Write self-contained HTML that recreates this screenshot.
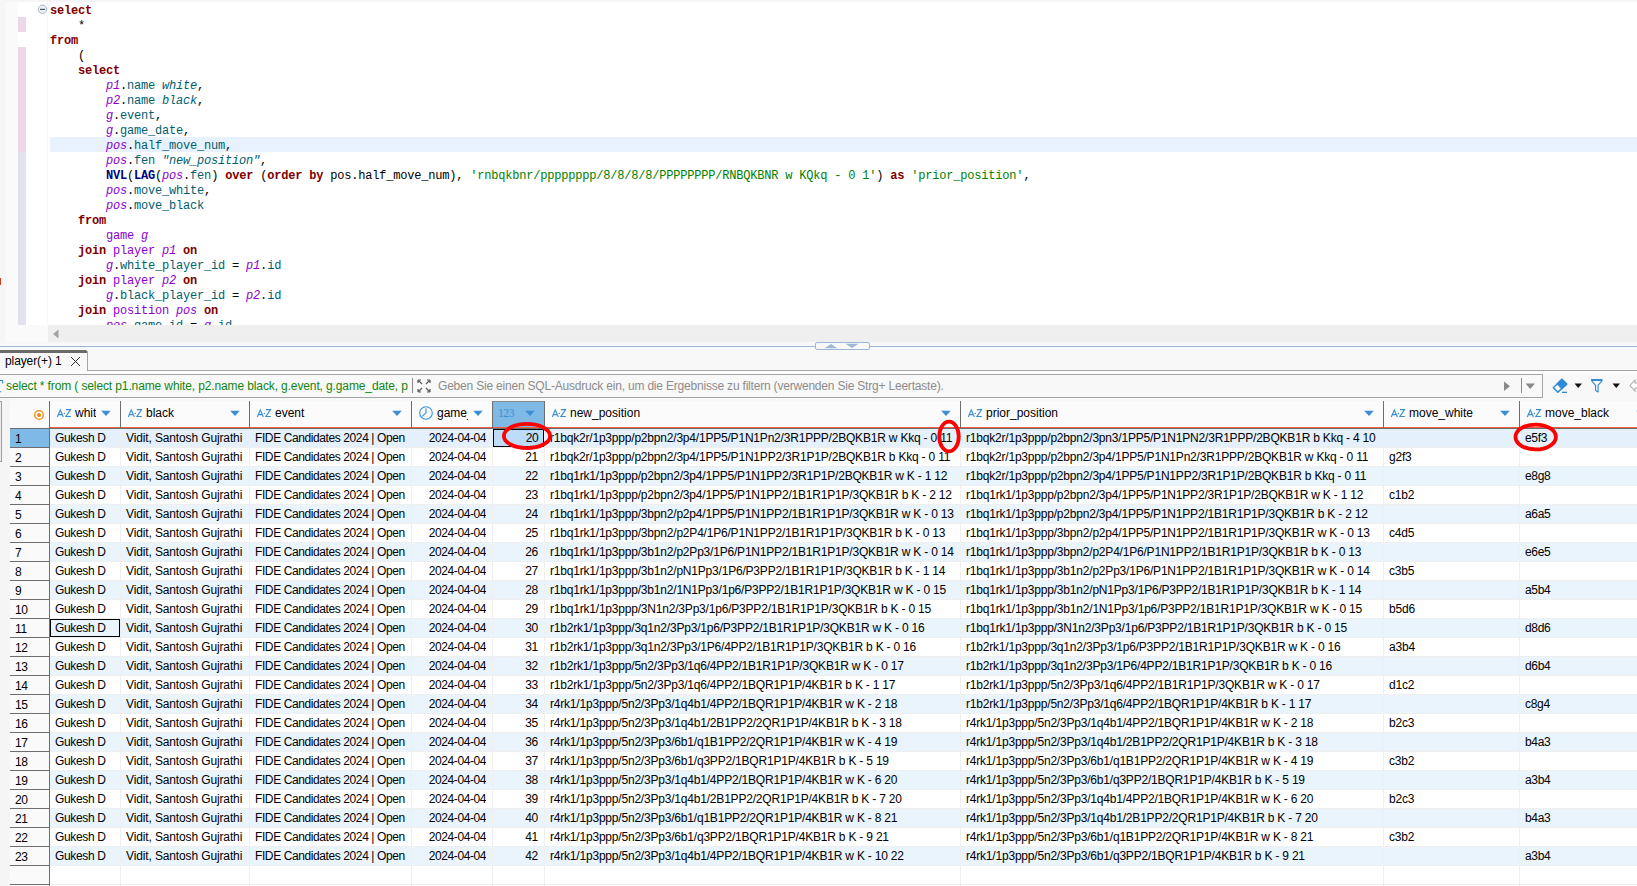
<!DOCTYPE html><html><head><meta charset="utf-8"><title>DBeaver</title><style>
html,body{margin:0;padding:0}
body{width:1637px;height:886px;overflow:hidden;position:relative;background:#f8f8f8;font-family:"Liberation Sans",sans-serif;font-size:12px;color:#000}
.a{position:absolute}
.code{position:absolute;left:50px;height:15px;line-height:15px;white-space:pre;font-family:"Liberation Mono",monospace;font-size:12px;letter-spacing:-0.2px;color:#000}
.k{color:#800000;font-weight:bold}
.f{color:#000080;font-weight:bold}
.al{color:#8d00d0;font-style:italic}
.tb{color:#8d00d0}
.c{color:#006070}
.ci{color:#006070;font-style:italic}
.s{color:#008000}
.hc{position:absolute;top:401px;height:26px;background:#fbfbfb}
.hl{position:absolute;top:401px;height:27px;width:1px;background:#6e6e6e}
.ht{position:absolute;top:403px;height:20px;line-height:20px;white-space:nowrap;overflow:hidden}
.cell{position:absolute;height:18px;line-height:18px;white-space:nowrap;overflow:hidden}
</style></head><body>
<div class="a" style="left:0;top:0;width:1637px;height:325px;background:#fff"></div>
<div class="a" style="left:0;top:0;width:1637px;height:2px;background:#f5f5f5"></div>
<div class="a" style="left:0;top:0;width:6px;height:346px;background:#f6f6f6"></div>
<div class="a" style="left:6px;top:2px;width:12px;height:340px;background:#fafafa"></div>
<div class="a" style="left:18px;top:325px;width:30px;height:17px;background:#fafafa"></div>
<div class="a" style="left:47px;top:2px;width:1px;height:323px;background:#f7f7f7"></div>
<div class="a" style="left:18px;top:17px;width:8px;height:15px;background:#e9d9ea"></div>
<div class="a" style="left:18px;top:47px;width:8px;height:105px;background:#e9d9ea"></div>
<div class="a" style="left:18px;top:152px;width:8px;height:173px;background:#e2e2ef"></div>
<div class="a" style="left:0;top:278px;width:1px;height:7px;background:#d04020"></div>
<div class="a" style="left:50px;top:137px;width:1587px;height:15px;background:#e8f2fe"></div>
<svg class="a" style="left:37px;top:4px" width="12" height="12" viewBox="0 0 12 12"><circle cx="5.5" cy="5.3" r="4.2" fill="#eef2f6" stroke="#a9b4c2" stroke-width="1"/><rect x="3" y="4.8" width="5" height="1.2" fill="#4a5566"/></svg>
<div class="a" style="left:0;top:0;width:1637px;height:325px;overflow:hidden">
<div class="code" style="top:4px"><span class="k">select</span></div>
<div class="code" style="top:19px">    *</div>
<div class="code" style="top:34px"><span class="k">from</span></div>
<div class="code" style="top:49px">    (</div>
<div class="code" style="top:64px">    <span class="k">select</span></div>
<div class="code" style="top:79px">        <span class="al">p1</span>.<span class="c">name</span> <span class="ci">white</span>,</div>
<div class="code" style="top:94px">        <span class="al">p2</span>.<span class="c">name</span> <span class="ci">black</span>,</div>
<div class="code" style="top:109px">        <span class="al">g</span>.<span class="c">event</span>,</div>
<div class="code" style="top:124px">        <span class="al">g</span>.<span class="c">game_date</span>,</div>
<div class="code" style="top:139px">        <span class="al">pos</span>.<span class="c">half_move_num</span>,</div>
<div class="code" style="top:154px">        <span class="al">pos</span>.<span class="c">fen</span> <span class="ci">&quot;new_position&quot;</span>,</div>
<div class="code" style="top:169px">        <span class="f">NVL</span>(<span class="f">LAG</span>(<span class="al">pos</span>.<span class="c">fen</span>) <span class="k">over</span> (<span class="k">order by</span> pos.half_move_num), <span class="s">&#x27;rnbqkbnr/pppppppp/8/8/8/8/PPPPPPPP/RNBQKBNR w KQkq - 0 1&#x27;</span>) <span class="k">as</span> <span class="s">&#x27;prior_position&#x27;</span>,</div>
<div class="code" style="top:184px">        <span class="al">pos</span>.<span class="c">move_white</span>,</div>
<div class="code" style="top:199px">        <span class="al">pos</span>.<span class="c">move_black</span></div>
<div class="code" style="top:214px">    <span class="k">from</span></div>
<div class="code" style="top:229px">        <span class="tb">game</span> <span class="al">g</span></div>
<div class="code" style="top:244px">    <span class="k">join</span> <span class="tb">player</span> <span class="al">p1</span> <span class="k">on</span></div>
<div class="code" style="top:259px">        <span class="al">g</span>.<span class="c">white_player_id</span> = <span class="al">p1</span>.<span class="c">id</span></div>
<div class="code" style="top:274px">    <span class="k">join</span> <span class="tb">player</span> <span class="al">p2</span> <span class="k">on</span></div>
<div class="code" style="top:289px">        <span class="al">g</span>.<span class="c">black_player_id</span> = <span class="al">p2</span>.<span class="c">id</span></div>
<div class="code" style="top:304px">    <span class="k">join</span> <span class="tb">position</span> <span class="al">pos</span> <span class="k">on</span></div>
<div class="code" style="top:319px">        <span class="al">pos</span>.<span class="c">game_id</span> = <span class="al">g</span>.<span class="c">id</span></div>
</div>
<div class="a" style="left:48px;top:325px;width:1589px;height:17px;background:#efefef"></div>
<svg class="a" style="left:52px;top:329px" width="8" height="10" viewBox="0 0 8 10"><path d="M6.5 0.5 L6.5 9.5 L1 5 Z" fill="#a3a3a3"/></svg>
<div class="a" style="left:0;top:342px;width:1637px;height:4px;background:#f8f8f8"></div>
<div class="a" style="left:0;top:346px;width:1637px;height:1px;background:#9cb6d6"></div>
<div class="a" style="left:815px;top:342px;width:53px;height:6px;border:1px solid #9cb6d6;border-radius:2px;background:#f8f8f8"></div>
<svg class="a" style="left:824px;top:343px" width="40" height="6" viewBox="0 0 40 6"><path d="M0.5 5.2 L7 1 L13.5 5.2 Z" fill="#9fb7d5"/><path d="M21.5 0.8 L34.5 0.8 L28 5 Z" fill="#9fb7d5"/></svg>
<svg class="a" style="left:0;top:350px" width="89" height="3" viewBox="0 0 89 3"><path d="M0 0 H86 L88 2 V3 H0 Z" fill="#6a6a6a"/></svg>
<div class="a" style="left:87px;top:352px;width:1px;height:19px;background:#a4a4a4"></div>
<div class="a" style="left:87px;top:370px;width:1550px;height:1px;background:#a4a4a4"></div>
<div class="a" style="left:0;top:371px;width:1637px;height:3px;background:#fcfcfc"></div>
<div class="a" style="left:5px;top:353px;height:17px;line-height:17px;white-space:nowrap;color:#000;letter-spacing:-0.1px">player(+) 1</div>
<svg class="a" style="left:70px;top:356px" width="11" height="11" viewBox="0 0 11 11"><path d="M1 1 L10 10 M10 1 L1 10" stroke="#222" stroke-width="0.95"/></svg>
<div class="a" style="left:-2px;top:374px;width:1544px;height:22px;border:1px solid #a4a4a4;border-left:none;background:#f8f8f8"></div>
<svg class="a" style="left:0;top:378px" width="5" height="16" viewBox="0 0 5 16"><path d="M0 2.5 L2.6 2.5 L2.6 5.5" fill="none" stroke="#3a8fd4" stroke-width="1.1"/><path d="M0 13.8 L1.2 13.8" stroke="#3a8fd4" stroke-width="1.1"/></svg>
<div class="a" style="left:6px;top:376px;height:20px;line-height:20px;white-space:nowrap;color:#138513;letter-spacing:-0.12px;width:404px;overflow:hidden">select * from ( select p1.name white, p2.name black, g.event, g.game_date, p</div>
<div class="a" style="left:412px;top:378px;width:1px;height:15px;background:#8a8a8a"></div>
<svg class="a" style="left:416px;top:378px" width="16" height="16" viewBox="0 0 16 16"><g stroke="#606060" stroke-width="1.2" fill="none"><path d="M2 2 L6 6 M2 2 L2 5 M2 2 L5 2"/><path d="M14 2 L10 6 M14 2 L14 5 M14 2 L11 2"/><path d="M2 14 L6 10 M2 14 L2 11 M2 14 L5 14"/><path d="M14 14 L10 10 M14 14 L14 11 M14 14 L11 14"/></g></svg>
<div class="a" style="left:438px;top:376px;height:20px;line-height:20px;white-space:nowrap;color:#8c8c8c;letter-spacing:-0.2px">Geben Sie einen SQL-Ausdruck ein, um die Ergebnisse zu filtern (verwenden Sie Strg+ Leertaste).</div>
<svg class="a" style="left:1503px;top:381px" width="8" height="11" viewBox="0 0 8 11"><path d="M1 0.5 L7 5.3 L1 10 Z" fill="#8a8a8a"/></svg>
<div class="a" style="left:1521px;top:378px;width:1px;height:15px;background:#8a8a8a"></div>
<svg class="a" style="left:1525px;top:383px" width="11" height="7" viewBox="0 0 11 7"><path d="M0.5 0.5 L10 0.5 L5.25 6 Z" fill="#8a8a8a"/></svg>
<svg class="a" style="left:1552px;top:378px" width="17" height="17" viewBox="0 0 17 17"><path d="M9.9 1.3 L14.7 6.1 L5.9 14.1 L1.3 9.8 Z" fill="#fff" stroke="#2f8ad8" stroke-width="1.5" stroke-linejoin="round"/><path d="M9.9 1.3 L14.7 6.1 L9.9 10.6 L5.2 5.9 Z" fill="#2f8ad8" stroke="#2f8ad8" stroke-width="1.2" stroke-linejoin="round"/><rect x="10" y="13.7" width="5" height="1.3" fill="#2f8ad8"/></svg>
<svg class="a" style="left:1574px;top:383px" width="9" height="6" viewBox="0 0 9 6"><path d="M0.5 0.5 L8 0.5 L4.25 5 Z" fill="#111"/></svg>
<svg class="a" style="left:1590px;top:378px" width="14" height="16" viewBox="0 0 14 16"><rect x="1" y="1" width="11.5" height="2" fill="#2f8ad8"/><path d="M1.6 2.6 L5.6 7.4 V12.6 L8.1 14 V7.4 L12 2.6" fill="none" stroke="#2f8ad8" stroke-width="1.1" stroke-linejoin="round"/></svg>
<svg class="a" style="left:1612px;top:383px" width="9" height="6" viewBox="0 0 9 6"><path d="M0.5 0.5 L8 0.5 L4.25 5 Z" fill="#111"/></svg>
<svg class="a" style="left:1629px;top:379px" width="10" height="14" viewBox="0 0 10 14"><path d="M6 1 L1 6.5 L6 12 L6 9 L10 9 L10 4 L6 4 Z" fill="#fff" stroke="#b0b0b0" stroke-width="1.1"/></svg>
<div class="a" style="left:0;top:398px;width:10px;height:488px;background:#f5f5f5"></div>
<div class="a" style="left:-1px;top:401px;width:2px;height:59px;border:1px solid #a0a0a0;border-left:none;background:#ececec"></div>
<div class="a" style="left:10px;top:401px;width:1627px;height:485px;background:#fff"></div>
<div class="a" style="left:50px;top:429px;width:1587px;height:18px;background:#e4f0fc"></div>
<div class="a" style="left:50px;top:448px;width:1587px;height:19px;background:#fff"></div>
<div class="a" style="left:50px;top:447px;width:1587px;height:1px;background:#efefef"></div>
<div class="a" style="left:50px;top:467px;width:1587px;height:19px;background:#eaf4fd"></div>
<div class="a" style="left:50px;top:466px;width:1587px;height:1px;background:#efefef"></div>
<div class="a" style="left:50px;top:486px;width:1587px;height:19px;background:#fff"></div>
<div class="a" style="left:50px;top:485px;width:1587px;height:1px;background:#efefef"></div>
<div class="a" style="left:50px;top:505px;width:1587px;height:19px;background:#eaf4fd"></div>
<div class="a" style="left:50px;top:504px;width:1587px;height:1px;background:#efefef"></div>
<div class="a" style="left:50px;top:524px;width:1587px;height:19px;background:#fff"></div>
<div class="a" style="left:50px;top:523px;width:1587px;height:1px;background:#efefef"></div>
<div class="a" style="left:50px;top:543px;width:1587px;height:19px;background:#eaf4fd"></div>
<div class="a" style="left:50px;top:542px;width:1587px;height:1px;background:#efefef"></div>
<div class="a" style="left:50px;top:562px;width:1587px;height:19px;background:#fff"></div>
<div class="a" style="left:50px;top:561px;width:1587px;height:1px;background:#efefef"></div>
<div class="a" style="left:50px;top:581px;width:1587px;height:19px;background:#eaf4fd"></div>
<div class="a" style="left:50px;top:580px;width:1587px;height:1px;background:#efefef"></div>
<div class="a" style="left:50px;top:600px;width:1587px;height:19px;background:#fff"></div>
<div class="a" style="left:50px;top:599px;width:1587px;height:1px;background:#efefef"></div>
<div class="a" style="left:50px;top:619px;width:1587px;height:19px;background:#eaf4fd"></div>
<div class="a" style="left:50px;top:618px;width:1587px;height:1px;background:#efefef"></div>
<div class="a" style="left:50px;top:638px;width:1587px;height:19px;background:#fff"></div>
<div class="a" style="left:50px;top:637px;width:1587px;height:1px;background:#efefef"></div>
<div class="a" style="left:50px;top:657px;width:1587px;height:19px;background:#eaf4fd"></div>
<div class="a" style="left:50px;top:656px;width:1587px;height:1px;background:#efefef"></div>
<div class="a" style="left:50px;top:676px;width:1587px;height:19px;background:#fff"></div>
<div class="a" style="left:50px;top:675px;width:1587px;height:1px;background:#efefef"></div>
<div class="a" style="left:50px;top:695px;width:1587px;height:19px;background:#eaf4fd"></div>
<div class="a" style="left:50px;top:694px;width:1587px;height:1px;background:#efefef"></div>
<div class="a" style="left:50px;top:714px;width:1587px;height:19px;background:#fff"></div>
<div class="a" style="left:50px;top:713px;width:1587px;height:1px;background:#efefef"></div>
<div class="a" style="left:50px;top:733px;width:1587px;height:19px;background:#eaf4fd"></div>
<div class="a" style="left:50px;top:732px;width:1587px;height:1px;background:#efefef"></div>
<div class="a" style="left:50px;top:752px;width:1587px;height:19px;background:#fff"></div>
<div class="a" style="left:50px;top:751px;width:1587px;height:1px;background:#efefef"></div>
<div class="a" style="left:50px;top:771px;width:1587px;height:19px;background:#eaf4fd"></div>
<div class="a" style="left:50px;top:770px;width:1587px;height:1px;background:#efefef"></div>
<div class="a" style="left:50px;top:790px;width:1587px;height:19px;background:#fff"></div>
<div class="a" style="left:50px;top:789px;width:1587px;height:1px;background:#efefef"></div>
<div class="a" style="left:50px;top:809px;width:1587px;height:19px;background:#eaf4fd"></div>
<div class="a" style="left:50px;top:808px;width:1587px;height:1px;background:#efefef"></div>
<div class="a" style="left:50px;top:828px;width:1587px;height:19px;background:#fff"></div>
<div class="a" style="left:50px;top:827px;width:1587px;height:1px;background:#efefef"></div>
<div class="a" style="left:50px;top:847px;width:1587px;height:19px;background:#eaf4fd"></div>
<div class="a" style="left:50px;top:846px;width:1587px;height:1px;background:#efefef"></div>
<div class="a" style="left:50px;top:866px;width:1587px;height:19px;background:#fff"></div>
<div class="a" style="left:50px;top:865px;width:1587px;height:1px;background:#efefef"></div>
<div class="a" style="left:50px;top:884px;width:1587px;height:1px;background:#efefef"></div>
<div class="a" style="left:120px;top:429px;width:1px;height:457px;background:#efefef"></div>
<div class="a" style="left:249px;top:429px;width:1px;height:457px;background:#efefef"></div>
<div class="a" style="left:411px;top:429px;width:1px;height:457px;background:#efefef"></div>
<div class="a" style="left:492px;top:429px;width:1px;height:457px;background:#efefef"></div>
<div class="a" style="left:544px;top:429px;width:1px;height:457px;background:#efefef"></div>
<div class="a" style="left:960px;top:429px;width:1px;height:457px;background:#efefef"></div>
<div class="a" style="left:1383px;top:429px;width:1px;height:457px;background:#efefef"></div>
<div class="a" style="left:1519px;top:429px;width:1px;height:457px;background:#efefef"></div>
<div class="a" style="left:10px;top:401px;width:39px;height:485px;background:#fafafa"></div>
<div class="a" style="left:10px;top:429px;width:39px;height:18px;background:#7fb9e6"></div>
<div class="a" style="left:10px;top:428px;width:39px;height:1px;background:#6e6e6e"></div>
<div class="a" style="left:10px;top:447px;width:39px;height:1px;background:#6e6e6e"></div>
<div class="a" style="left:10px;top:466px;width:39px;height:1px;background:#6e6e6e"></div>
<div class="a" style="left:10px;top:485px;width:39px;height:1px;background:#6e6e6e"></div>
<div class="a" style="left:10px;top:504px;width:39px;height:1px;background:#6e6e6e"></div>
<div class="a" style="left:10px;top:523px;width:39px;height:1px;background:#6e6e6e"></div>
<div class="a" style="left:10px;top:542px;width:39px;height:1px;background:#6e6e6e"></div>
<div class="a" style="left:10px;top:561px;width:39px;height:1px;background:#6e6e6e"></div>
<div class="a" style="left:10px;top:580px;width:39px;height:1px;background:#6e6e6e"></div>
<div class="a" style="left:10px;top:599px;width:39px;height:1px;background:#6e6e6e"></div>
<div class="a" style="left:10px;top:618px;width:39px;height:1px;background:#6e6e6e"></div>
<div class="a" style="left:10px;top:637px;width:39px;height:1px;background:#6e6e6e"></div>
<div class="a" style="left:10px;top:656px;width:39px;height:1px;background:#6e6e6e"></div>
<div class="a" style="left:10px;top:675px;width:39px;height:1px;background:#6e6e6e"></div>
<div class="a" style="left:10px;top:694px;width:39px;height:1px;background:#6e6e6e"></div>
<div class="a" style="left:10px;top:713px;width:39px;height:1px;background:#6e6e6e"></div>
<div class="a" style="left:10px;top:732px;width:39px;height:1px;background:#6e6e6e"></div>
<div class="a" style="left:10px;top:751px;width:39px;height:1px;background:#6e6e6e"></div>
<div class="a" style="left:10px;top:770px;width:39px;height:1px;background:#6e6e6e"></div>
<div class="a" style="left:10px;top:789px;width:39px;height:1px;background:#6e6e6e"></div>
<div class="a" style="left:10px;top:808px;width:39px;height:1px;background:#6e6e6e"></div>
<div class="a" style="left:10px;top:827px;width:39px;height:1px;background:#6e6e6e"></div>
<div class="a" style="left:10px;top:846px;width:39px;height:1px;background:#6e6e6e"></div>
<div class="a" style="left:10px;top:865px;width:39px;height:1px;background:#6e6e6e"></div>
<div class="a" style="left:10px;top:884px;width:39px;height:1px;background:#6e6e6e"></div>
<div class="cell" style="left:15px;top:430px;width:34px;letter-spacing:-0.3px">1</div>
<div class="cell" style="left:15px;top:449px;width:34px;letter-spacing:-0.3px">2</div>
<div class="cell" style="left:15px;top:468px;width:34px;letter-spacing:-0.3px">3</div>
<div class="cell" style="left:15px;top:487px;width:34px;letter-spacing:-0.3px">4</div>
<div class="cell" style="left:15px;top:506px;width:34px;letter-spacing:-0.3px">5</div>
<div class="cell" style="left:15px;top:525px;width:34px;letter-spacing:-0.3px">6</div>
<div class="cell" style="left:15px;top:544px;width:34px;letter-spacing:-0.3px">7</div>
<div class="cell" style="left:15px;top:563px;width:34px;letter-spacing:-0.3px">8</div>
<div class="cell" style="left:15px;top:582px;width:34px;letter-spacing:-0.3px">9</div>
<div class="cell" style="left:15px;top:601px;width:34px;letter-spacing:-0.3px">10</div>
<div class="cell" style="left:15px;top:620px;width:34px;letter-spacing:-0.3px">11</div>
<div class="cell" style="left:15px;top:639px;width:34px;letter-spacing:-0.3px">12</div>
<div class="cell" style="left:15px;top:658px;width:34px;letter-spacing:-0.3px">13</div>
<div class="cell" style="left:15px;top:677px;width:34px;letter-spacing:-0.3px">14</div>
<div class="cell" style="left:15px;top:696px;width:34px;letter-spacing:-0.3px">15</div>
<div class="cell" style="left:15px;top:715px;width:34px;letter-spacing:-0.3px">16</div>
<div class="cell" style="left:15px;top:734px;width:34px;letter-spacing:-0.3px">17</div>
<div class="cell" style="left:15px;top:753px;width:34px;letter-spacing:-0.3px">18</div>
<div class="cell" style="left:15px;top:772px;width:34px;letter-spacing:-0.3px">19</div>
<div class="cell" style="left:15px;top:791px;width:34px;letter-spacing:-0.3px">20</div>
<div class="cell" style="left:15px;top:810px;width:34px;letter-spacing:-0.3px">21</div>
<div class="cell" style="left:15px;top:829px;width:34px;letter-spacing:-0.3px">22</div>
<div class="cell" style="left:15px;top:848px;width:34px;letter-spacing:-0.3px">23</div>
<div class="a" style="left:49px;top:401px;width:1px;height:485px;background:#6e6e6e"></div>
<div class="a" style="left:50px;top:401px;width:1587px;height:26px;background:#fbfbfb"></div>
<div class="a" style="left:50px;top:427px;width:1587px;height:1px;background:#f35d3c"></div>
<div class="a" style="left:50px;top:428px;width:1587px;height:1px;background:#6e6e6e"></div>
<div class="a" style="left:493px;top:402px;width:51px;height:25px;background:#7fb9e6"></div>
<div class="a" style="left:492px;top:401px;width:53px;height:1px;background:#8a8a8a"></div>
<div class="a" style="left:544px;top:401px;width:1px;height:27px;background:#8a8a8a"></div>
<div class="hl" style="left:49px"></div>
<div class="hl" style="left:120px"></div>
<div class="hl" style="left:249px"></div>
<div class="hl" style="left:411px"></div>
<div class="hl" style="left:492px"></div>
<div class="hl" style="left:544px"></div>
<div class="hl" style="left:960px"></div>
<div class="hl" style="left:1383px"></div>
<div class="hl" style="left:1519px"></div>
<svg class="a" style="left:33px;top:409px" width="12" height="12" viewBox="0 0 12 12"><circle cx="6" cy="6" r="4.3" fill="none" stroke="#f0870f" stroke-width="1.3"/><circle cx="6" cy="6" r="2" fill="#f0870f"/></svg>
<svg class="a" style="left:56px;top:408px" width="16" height="10" viewBox="0 0 16 10"><g fill="none" stroke="#3a8fd4" stroke-width="1.15"><path d="M1.3 9 L4.3 1.9 L7.3 9 M2.4 6.6 L6.2 6.6"/><path d="M9.9 1.55 L14.6 1.55 L9.9 8.45 L14.9 8.45"/></g><rect x="7.8" y="4.8" width="1.2" height="1.2" fill="#3a8fd4"/></svg>
<div class="ht" style="left:75px;width:21px">white</div>
<svg class="a" style="left:101px;top:410px" width="10" height="7" viewBox="0 0 10 7"><path d="M0.2 0.8 L9.8 0.8 L5 6 Z" fill="#3a8fd4"/></svg>
<svg class="a" style="left:127px;top:408px" width="16" height="10" viewBox="0 0 16 10"><g fill="none" stroke="#3a8fd4" stroke-width="1.15"><path d="M1.3 9 L4.3 1.9 L7.3 9 M2.4 6.6 L6.2 6.6"/><path d="M9.9 1.55 L14.6 1.55 L9.9 8.45 L14.9 8.45"/></g><rect x="7.8" y="4.8" width="1.2" height="1.2" fill="#3a8fd4"/></svg>
<div class="ht" style="left:146px;width:79px">black</div>
<svg class="a" style="left:230px;top:410px" width="10" height="7" viewBox="0 0 10 7"><path d="M0.2 0.8 L9.8 0.8 L5 6 Z" fill="#3a8fd4"/></svg>
<svg class="a" style="left:256px;top:408px" width="16" height="10" viewBox="0 0 16 10"><g fill="none" stroke="#3a8fd4" stroke-width="1.15"><path d="M1.3 9 L4.3 1.9 L7.3 9 M2.4 6.6 L6.2 6.6"/><path d="M9.9 1.55 L14.6 1.55 L9.9 8.45 L14.9 8.45"/></g><rect x="7.8" y="4.8" width="1.2" height="1.2" fill="#3a8fd4"/></svg>
<div class="ht" style="left:275px;width:112px">event</div>
<svg class="a" style="left:392px;top:410px" width="10" height="7" viewBox="0 0 10 7"><path d="M0.2 0.8 L9.8 0.8 L5 6 Z" fill="#3a8fd4"/></svg>
<svg class="a" style="left:418px;top:405px" width="16" height="16" viewBox="0 0 16 16"><circle cx="8" cy="8" r="6.3" fill="none" stroke="#3a8fd4" stroke-width="1.1"/><path d="M8 3.2 L8 7.8 L4.2 11.4" fill="none" stroke="#3a8fd4" stroke-width="1.1"/></svg>
<div class="ht" style="left:437px;width:31px">game_date</div>
<svg class="a" style="left:473px;top:410px" width="10" height="7" viewBox="0 0 10 7"><path d="M0.2 0.8 L9.8 0.8 L5 6 Z" fill="#3a8fd4"/></svg>
<div class="ht" style="left:498px;width:30px;color:#3a8fd4;font-family:'Liberation Serif',serif;font-size:11.5px;letter-spacing:-0.4px">123</div>
<svg class="a" style="left:525px;top:410px" width="10" height="7" viewBox="0 0 10 7"><path d="M0.2 0.8 L9.8 0.8 L5 6 Z" fill="#3a8fd4"/></svg>
<svg class="a" style="left:551px;top:408px" width="16" height="10" viewBox="0 0 16 10"><g fill="none" stroke="#3a8fd4" stroke-width="1.15"><path d="M1.3 9 L4.3 1.9 L7.3 9 M2.4 6.6 L6.2 6.6"/><path d="M9.9 1.55 L14.6 1.55 L9.9 8.45 L14.9 8.45"/></g><rect x="7.8" y="4.8" width="1.2" height="1.2" fill="#3a8fd4"/></svg>
<div class="ht" style="left:570px;width:366px">new_position</div>
<svg class="a" style="left:941px;top:410px" width="10" height="7" viewBox="0 0 10 7"><path d="M0.2 0.8 L9.8 0.8 L5 6 Z" fill="#3a8fd4"/></svg>
<svg class="a" style="left:967px;top:408px" width="16" height="10" viewBox="0 0 16 10"><g fill="none" stroke="#3a8fd4" stroke-width="1.15"><path d="M1.3 9 L4.3 1.9 L7.3 9 M2.4 6.6 L6.2 6.6"/><path d="M9.9 1.55 L14.6 1.55 L9.9 8.45 L14.9 8.45"/></g><rect x="7.8" y="4.8" width="1.2" height="1.2" fill="#3a8fd4"/></svg>
<div class="ht" style="left:986px;width:373px">prior_position</div>
<svg class="a" style="left:1364px;top:410px" width="10" height="7" viewBox="0 0 10 7"><path d="M0.2 0.8 L9.8 0.8 L5 6 Z" fill="#3a8fd4"/></svg>
<svg class="a" style="left:1390px;top:408px" width="16" height="10" viewBox="0 0 16 10"><g fill="none" stroke="#3a8fd4" stroke-width="1.15"><path d="M1.3 9 L4.3 1.9 L7.3 9 M2.4 6.6 L6.2 6.6"/><path d="M9.9 1.55 L14.6 1.55 L9.9 8.45 L14.9 8.45"/></g><rect x="7.8" y="4.8" width="1.2" height="1.2" fill="#3a8fd4"/></svg>
<div class="ht" style="left:1409px;width:86px">move_white</div>
<svg class="a" style="left:1500px;top:410px" width="10" height="7" viewBox="0 0 10 7"><path d="M0.2 0.8 L9.8 0.8 L5 6 Z" fill="#3a8fd4"/></svg>
<svg class="a" style="left:1526px;top:408px" width="16" height="10" viewBox="0 0 16 10"><g fill="none" stroke="#3a8fd4" stroke-width="1.15"><path d="M1.3 9 L4.3 1.9 L7.3 9 M2.4 6.6 L6.2 6.6"/><path d="M9.9 1.55 L14.6 1.55 L9.9 8.45 L14.9 8.45"/></g><rect x="7.8" y="4.8" width="1.2" height="1.2" fill="#3a8fd4"/></svg>
<div class="ht" style="left:1545px;width:86px">move_black</div>
<svg class="a" style="left:1636px;top:410px" width="10" height="7" viewBox="0 0 10 7"><path d="M0.2 0.8 L9.8 0.8 L5 6 Z" fill="#3a8fd4"/></svg>
<div class="cell" style="left:55px;top:429px;width:65px;letter-spacing:-0.35px">Gukesh D</div>
<div class="cell" style="left:126px;top:429px;width:123px;letter-spacing:-0.13px">Vidit, Santosh Gujrathi</div>
<div class="cell" style="left:255px;top:429px;width:156px;letter-spacing:-0.4px">FIDE Candidates 2024 | Open</div>
<div class="cell" style="left:412px;top:429px;width:74px;text-align:right;letter-spacing:-0.42px">2024-04-04</div>
<div class="cell" style="left:493px;top:429px;width:45px;text-align:right;letter-spacing:-0.3px">20</div>
<div class="cell" style="left:550px;top:429px;width:410px;letter-spacing:-0.2px">r1bqk2r/1p3ppp/p2bpn2/3p4/1PP5/P1N1Pn2/3R1PPP/2BQKB1R w Kkq - 0 11</div>
<div class="cell" style="left:966px;top:429px;width:417px;letter-spacing:-0.2px">r1bqk2r/1p3ppp/p2bpn2/3pn3/1PP5/P1N1PN2/3R1PPP/2BQKB1R b Kkq - 4 10</div>
<div class="cell" style="left:1525px;top:429px;width:112px;letter-spacing:-0.3px">e5f3</div>
<div class="cell" style="left:55px;top:448px;width:65px;letter-spacing:-0.35px">Gukesh D</div>
<div class="cell" style="left:126px;top:448px;width:123px;letter-spacing:-0.13px">Vidit, Santosh Gujrathi</div>
<div class="cell" style="left:255px;top:448px;width:156px;letter-spacing:-0.4px">FIDE Candidates 2024 | Open</div>
<div class="cell" style="left:412px;top:448px;width:74px;text-align:right;letter-spacing:-0.42px">2024-04-04</div>
<div class="cell" style="left:493px;top:448px;width:45px;text-align:right;letter-spacing:-0.3px">21</div>
<div class="cell" style="left:550px;top:448px;width:410px;letter-spacing:-0.2px">r1bqk2r/1p3ppp/p2bpn2/3p4/1PP5/P1N1PP2/3R1P1P/2BQKB1R b Kkq - 0 11</div>
<div class="cell" style="left:966px;top:448px;width:417px;letter-spacing:-0.2px">r1bqk2r/1p3ppp/p2bpn2/3p4/1PP5/P1N1Pn2/3R1PPP/2BQKB1R w Kkq - 0 11</div>
<div class="cell" style="left:1389px;top:448px;width:130px;letter-spacing:-0.2px">g2f3</div>
<div class="cell" style="left:55px;top:467px;width:65px;letter-spacing:-0.35px">Gukesh D</div>
<div class="cell" style="left:126px;top:467px;width:123px;letter-spacing:-0.13px">Vidit, Santosh Gujrathi</div>
<div class="cell" style="left:255px;top:467px;width:156px;letter-spacing:-0.4px">FIDE Candidates 2024 | Open</div>
<div class="cell" style="left:412px;top:467px;width:74px;text-align:right;letter-spacing:-0.42px">2024-04-04</div>
<div class="cell" style="left:493px;top:467px;width:45px;text-align:right;letter-spacing:-0.3px">22</div>
<div class="cell" style="left:550px;top:467px;width:410px;letter-spacing:-0.2px">r1bq1rk1/1p3ppp/p2bpn2/3p4/1PP5/P1N1PP2/3R1P1P/2BQKB1R w K - 1 12</div>
<div class="cell" style="left:966px;top:467px;width:417px;letter-spacing:-0.2px">r1bqk2r/1p3ppp/p2bpn2/3p4/1PP5/P1N1PP2/3R1P1P/2BQKB1R b Kkq - 0 11</div>
<div class="cell" style="left:1525px;top:467px;width:112px;letter-spacing:-0.3px">e8g8</div>
<div class="cell" style="left:55px;top:486px;width:65px;letter-spacing:-0.35px">Gukesh D</div>
<div class="cell" style="left:126px;top:486px;width:123px;letter-spacing:-0.13px">Vidit, Santosh Gujrathi</div>
<div class="cell" style="left:255px;top:486px;width:156px;letter-spacing:-0.4px">FIDE Candidates 2024 | Open</div>
<div class="cell" style="left:412px;top:486px;width:74px;text-align:right;letter-spacing:-0.42px">2024-04-04</div>
<div class="cell" style="left:493px;top:486px;width:45px;text-align:right;letter-spacing:-0.3px">23</div>
<div class="cell" style="left:550px;top:486px;width:410px;letter-spacing:-0.2px">r1bq1rk1/1p3ppp/p2bpn2/3p4/1PP5/P1N1PP2/1B1R1P1P/3QKB1R b K - 2 12</div>
<div class="cell" style="left:966px;top:486px;width:417px;letter-spacing:-0.2px">r1bq1rk1/1p3ppp/p2bpn2/3p4/1PP5/P1N1PP2/3R1P1P/2BQKB1R w K - 1 12</div>
<div class="cell" style="left:1389px;top:486px;width:130px;letter-spacing:-0.2px">c1b2</div>
<div class="cell" style="left:55px;top:505px;width:65px;letter-spacing:-0.35px">Gukesh D</div>
<div class="cell" style="left:126px;top:505px;width:123px;letter-spacing:-0.13px">Vidit, Santosh Gujrathi</div>
<div class="cell" style="left:255px;top:505px;width:156px;letter-spacing:-0.4px">FIDE Candidates 2024 | Open</div>
<div class="cell" style="left:412px;top:505px;width:74px;text-align:right;letter-spacing:-0.42px">2024-04-04</div>
<div class="cell" style="left:493px;top:505px;width:45px;text-align:right;letter-spacing:-0.3px">24</div>
<div class="cell" style="left:550px;top:505px;width:410px;letter-spacing:-0.2px">r1bq1rk1/1p3ppp/3bpn2/p2p4/1PP5/P1N1PP2/1B1R1P1P/3QKB1R w K - 0 13</div>
<div class="cell" style="left:966px;top:505px;width:417px;letter-spacing:-0.2px">r1bq1rk1/1p3ppp/p2bpn2/3p4/1PP5/P1N1PP2/1B1R1P1P/3QKB1R b K - 2 12</div>
<div class="cell" style="left:1525px;top:505px;width:112px;letter-spacing:-0.3px">a6a5</div>
<div class="cell" style="left:55px;top:524px;width:65px;letter-spacing:-0.35px">Gukesh D</div>
<div class="cell" style="left:126px;top:524px;width:123px;letter-spacing:-0.13px">Vidit, Santosh Gujrathi</div>
<div class="cell" style="left:255px;top:524px;width:156px;letter-spacing:-0.4px">FIDE Candidates 2024 | Open</div>
<div class="cell" style="left:412px;top:524px;width:74px;text-align:right;letter-spacing:-0.42px">2024-04-04</div>
<div class="cell" style="left:493px;top:524px;width:45px;text-align:right;letter-spacing:-0.3px">25</div>
<div class="cell" style="left:550px;top:524px;width:410px;letter-spacing:-0.2px">r1bq1rk1/1p3ppp/3bpn2/p2P4/1P6/P1N1PP2/1B1R1P1P/3QKB1R b K - 0 13</div>
<div class="cell" style="left:966px;top:524px;width:417px;letter-spacing:-0.2px">r1bq1rk1/1p3ppp/3bpn2/p2p4/1PP5/P1N1PP2/1B1R1P1P/3QKB1R w K - 0 13</div>
<div class="cell" style="left:1389px;top:524px;width:130px;letter-spacing:-0.2px">c4d5</div>
<div class="cell" style="left:55px;top:543px;width:65px;letter-spacing:-0.35px">Gukesh D</div>
<div class="cell" style="left:126px;top:543px;width:123px;letter-spacing:-0.13px">Vidit, Santosh Gujrathi</div>
<div class="cell" style="left:255px;top:543px;width:156px;letter-spacing:-0.4px">FIDE Candidates 2024 | Open</div>
<div class="cell" style="left:412px;top:543px;width:74px;text-align:right;letter-spacing:-0.42px">2024-04-04</div>
<div class="cell" style="left:493px;top:543px;width:45px;text-align:right;letter-spacing:-0.3px">26</div>
<div class="cell" style="left:550px;top:543px;width:410px;letter-spacing:-0.2px">r1bq1rk1/1p3ppp/3b1n2/p2Pp3/1P6/P1N1PP2/1B1R1P1P/3QKB1R w K - 0 14</div>
<div class="cell" style="left:966px;top:543px;width:417px;letter-spacing:-0.2px">r1bq1rk1/1p3ppp/3bpn2/p2P4/1P6/P1N1PP2/1B1R1P1P/3QKB1R b K - 0 13</div>
<div class="cell" style="left:1525px;top:543px;width:112px;letter-spacing:-0.3px">e6e5</div>
<div class="cell" style="left:55px;top:562px;width:65px;letter-spacing:-0.35px">Gukesh D</div>
<div class="cell" style="left:126px;top:562px;width:123px;letter-spacing:-0.13px">Vidit, Santosh Gujrathi</div>
<div class="cell" style="left:255px;top:562px;width:156px;letter-spacing:-0.4px">FIDE Candidates 2024 | Open</div>
<div class="cell" style="left:412px;top:562px;width:74px;text-align:right;letter-spacing:-0.42px">2024-04-04</div>
<div class="cell" style="left:493px;top:562px;width:45px;text-align:right;letter-spacing:-0.3px">27</div>
<div class="cell" style="left:550px;top:562px;width:410px;letter-spacing:-0.2px">r1bq1rk1/1p3ppp/3b1n2/pN1Pp3/1P6/P3PP2/1B1R1P1P/3QKB1R b K - 1 14</div>
<div class="cell" style="left:966px;top:562px;width:417px;letter-spacing:-0.2px">r1bq1rk1/1p3ppp/3b1n2/p2Pp3/1P6/P1N1PP2/1B1R1P1P/3QKB1R w K - 0 14</div>
<div class="cell" style="left:1389px;top:562px;width:130px;letter-spacing:-0.2px">c3b5</div>
<div class="cell" style="left:55px;top:581px;width:65px;letter-spacing:-0.35px">Gukesh D</div>
<div class="cell" style="left:126px;top:581px;width:123px;letter-spacing:-0.13px">Vidit, Santosh Gujrathi</div>
<div class="cell" style="left:255px;top:581px;width:156px;letter-spacing:-0.4px">FIDE Candidates 2024 | Open</div>
<div class="cell" style="left:412px;top:581px;width:74px;text-align:right;letter-spacing:-0.42px">2024-04-04</div>
<div class="cell" style="left:493px;top:581px;width:45px;text-align:right;letter-spacing:-0.3px">28</div>
<div class="cell" style="left:550px;top:581px;width:410px;letter-spacing:-0.2px">r1bq1rk1/1p3ppp/3b1n2/1N1Pp3/1p6/P3PP2/1B1R1P1P/3QKB1R w K - 0 15</div>
<div class="cell" style="left:966px;top:581px;width:417px;letter-spacing:-0.2px">r1bq1rk1/1p3ppp/3b1n2/pN1Pp3/1P6/P3PP2/1B1R1P1P/3QKB1R b K - 1 14</div>
<div class="cell" style="left:1525px;top:581px;width:112px;letter-spacing:-0.3px">a5b4</div>
<div class="cell" style="left:55px;top:600px;width:65px;letter-spacing:-0.35px">Gukesh D</div>
<div class="cell" style="left:126px;top:600px;width:123px;letter-spacing:-0.13px">Vidit, Santosh Gujrathi</div>
<div class="cell" style="left:255px;top:600px;width:156px;letter-spacing:-0.4px">FIDE Candidates 2024 | Open</div>
<div class="cell" style="left:412px;top:600px;width:74px;text-align:right;letter-spacing:-0.42px">2024-04-04</div>
<div class="cell" style="left:493px;top:600px;width:45px;text-align:right;letter-spacing:-0.3px">29</div>
<div class="cell" style="left:550px;top:600px;width:410px;letter-spacing:-0.2px">r1bq1rk1/1p3ppp/3N1n2/3Pp3/1p6/P3PP2/1B1R1P1P/3QKB1R b K - 0 15</div>
<div class="cell" style="left:966px;top:600px;width:417px;letter-spacing:-0.2px">r1bq1rk1/1p3ppp/3b1n2/1N1Pp3/1p6/P3PP2/1B1R1P1P/3QKB1R w K - 0 15</div>
<div class="cell" style="left:1389px;top:600px;width:130px;letter-spacing:-0.2px">b5d6</div>
<div class="cell" style="left:55px;top:619px;width:65px;letter-spacing:-0.35px">Gukesh D</div>
<div class="cell" style="left:126px;top:619px;width:123px;letter-spacing:-0.13px">Vidit, Santosh Gujrathi</div>
<div class="cell" style="left:255px;top:619px;width:156px;letter-spacing:-0.4px">FIDE Candidates 2024 | Open</div>
<div class="cell" style="left:412px;top:619px;width:74px;text-align:right;letter-spacing:-0.42px">2024-04-04</div>
<div class="cell" style="left:493px;top:619px;width:45px;text-align:right;letter-spacing:-0.3px">30</div>
<div class="cell" style="left:550px;top:619px;width:410px;letter-spacing:-0.2px">r1b2rk1/1p3ppp/3q1n2/3Pp3/1p6/P3PP2/1B1R1P1P/3QKB1R w K - 0 16</div>
<div class="cell" style="left:966px;top:619px;width:417px;letter-spacing:-0.2px">r1bq1rk1/1p3ppp/3N1n2/3Pp3/1p6/P3PP2/1B1R1P1P/3QKB1R b K - 0 15</div>
<div class="cell" style="left:1525px;top:619px;width:112px;letter-spacing:-0.3px">d8d6</div>
<div class="cell" style="left:55px;top:638px;width:65px;letter-spacing:-0.35px">Gukesh D</div>
<div class="cell" style="left:126px;top:638px;width:123px;letter-spacing:-0.13px">Vidit, Santosh Gujrathi</div>
<div class="cell" style="left:255px;top:638px;width:156px;letter-spacing:-0.4px">FIDE Candidates 2024 | Open</div>
<div class="cell" style="left:412px;top:638px;width:74px;text-align:right;letter-spacing:-0.42px">2024-04-04</div>
<div class="cell" style="left:493px;top:638px;width:45px;text-align:right;letter-spacing:-0.3px">31</div>
<div class="cell" style="left:550px;top:638px;width:410px;letter-spacing:-0.2px">r1b2rk1/1p3ppp/3q1n2/3Pp3/1P6/4PP2/1B1R1P1P/3QKB1R b K - 0 16</div>
<div class="cell" style="left:966px;top:638px;width:417px;letter-spacing:-0.2px">r1b2rk1/1p3ppp/3q1n2/3Pp3/1p6/P3PP2/1B1R1P1P/3QKB1R w K - 0 16</div>
<div class="cell" style="left:1389px;top:638px;width:130px;letter-spacing:-0.2px">a3b4</div>
<div class="cell" style="left:55px;top:657px;width:65px;letter-spacing:-0.35px">Gukesh D</div>
<div class="cell" style="left:126px;top:657px;width:123px;letter-spacing:-0.13px">Vidit, Santosh Gujrathi</div>
<div class="cell" style="left:255px;top:657px;width:156px;letter-spacing:-0.4px">FIDE Candidates 2024 | Open</div>
<div class="cell" style="left:412px;top:657px;width:74px;text-align:right;letter-spacing:-0.42px">2024-04-04</div>
<div class="cell" style="left:493px;top:657px;width:45px;text-align:right;letter-spacing:-0.3px">32</div>
<div class="cell" style="left:550px;top:657px;width:410px;letter-spacing:-0.2px">r1b2rk1/1p3ppp/5n2/3Pp3/1q6/4PP2/1B1R1P1P/3QKB1R w K - 0 17</div>
<div class="cell" style="left:966px;top:657px;width:417px;letter-spacing:-0.2px">r1b2rk1/1p3ppp/3q1n2/3Pp3/1P6/4PP2/1B1R1P1P/3QKB1R b K - 0 16</div>
<div class="cell" style="left:1525px;top:657px;width:112px;letter-spacing:-0.3px">d6b4</div>
<div class="cell" style="left:55px;top:676px;width:65px;letter-spacing:-0.35px">Gukesh D</div>
<div class="cell" style="left:126px;top:676px;width:123px;letter-spacing:-0.13px">Vidit, Santosh Gujrathi</div>
<div class="cell" style="left:255px;top:676px;width:156px;letter-spacing:-0.4px">FIDE Candidates 2024 | Open</div>
<div class="cell" style="left:412px;top:676px;width:74px;text-align:right;letter-spacing:-0.42px">2024-04-04</div>
<div class="cell" style="left:493px;top:676px;width:45px;text-align:right;letter-spacing:-0.3px">33</div>
<div class="cell" style="left:550px;top:676px;width:410px;letter-spacing:-0.2px">r1b2rk1/1p3ppp/5n2/3Pp3/1q6/4PP2/1BQR1P1P/4KB1R b K - 1 17</div>
<div class="cell" style="left:966px;top:676px;width:417px;letter-spacing:-0.2px">r1b2rk1/1p3ppp/5n2/3Pp3/1q6/4PP2/1B1R1P1P/3QKB1R w K - 0 17</div>
<div class="cell" style="left:1389px;top:676px;width:130px;letter-spacing:-0.2px">d1c2</div>
<div class="cell" style="left:55px;top:695px;width:65px;letter-spacing:-0.35px">Gukesh D</div>
<div class="cell" style="left:126px;top:695px;width:123px;letter-spacing:-0.13px">Vidit, Santosh Gujrathi</div>
<div class="cell" style="left:255px;top:695px;width:156px;letter-spacing:-0.4px">FIDE Candidates 2024 | Open</div>
<div class="cell" style="left:412px;top:695px;width:74px;text-align:right;letter-spacing:-0.42px">2024-04-04</div>
<div class="cell" style="left:493px;top:695px;width:45px;text-align:right;letter-spacing:-0.3px">34</div>
<div class="cell" style="left:550px;top:695px;width:410px;letter-spacing:-0.2px">r4rk1/1p3ppp/5n2/3Pp3/1q4b1/4PP2/1BQR1P1P/4KB1R w K - 2 18</div>
<div class="cell" style="left:966px;top:695px;width:417px;letter-spacing:-0.2px">r1b2rk1/1p3ppp/5n2/3Pp3/1q6/4PP2/1BQR1P1P/4KB1R b K - 1 17</div>
<div class="cell" style="left:1525px;top:695px;width:112px;letter-spacing:-0.3px">c8g4</div>
<div class="cell" style="left:55px;top:714px;width:65px;letter-spacing:-0.35px">Gukesh D</div>
<div class="cell" style="left:126px;top:714px;width:123px;letter-spacing:-0.13px">Vidit, Santosh Gujrathi</div>
<div class="cell" style="left:255px;top:714px;width:156px;letter-spacing:-0.4px">FIDE Candidates 2024 | Open</div>
<div class="cell" style="left:412px;top:714px;width:74px;text-align:right;letter-spacing:-0.42px">2024-04-04</div>
<div class="cell" style="left:493px;top:714px;width:45px;text-align:right;letter-spacing:-0.3px">35</div>
<div class="cell" style="left:550px;top:714px;width:410px;letter-spacing:-0.2px">r4rk1/1p3ppp/5n2/3Pp3/1q4b1/2B1PP2/2QR1P1P/4KB1R b K - 3 18</div>
<div class="cell" style="left:966px;top:714px;width:417px;letter-spacing:-0.2px">r4rk1/1p3ppp/5n2/3Pp3/1q4b1/4PP2/1BQR1P1P/4KB1R w K - 2 18</div>
<div class="cell" style="left:1389px;top:714px;width:130px;letter-spacing:-0.2px">b2c3</div>
<div class="cell" style="left:55px;top:733px;width:65px;letter-spacing:-0.35px">Gukesh D</div>
<div class="cell" style="left:126px;top:733px;width:123px;letter-spacing:-0.13px">Vidit, Santosh Gujrathi</div>
<div class="cell" style="left:255px;top:733px;width:156px;letter-spacing:-0.4px">FIDE Candidates 2024 | Open</div>
<div class="cell" style="left:412px;top:733px;width:74px;text-align:right;letter-spacing:-0.42px">2024-04-04</div>
<div class="cell" style="left:493px;top:733px;width:45px;text-align:right;letter-spacing:-0.3px">36</div>
<div class="cell" style="left:550px;top:733px;width:410px;letter-spacing:-0.2px">r4rk1/1p3ppp/5n2/3Pp3/6b1/q1B1PP2/2QR1P1P/4KB1R w K - 4 19</div>
<div class="cell" style="left:966px;top:733px;width:417px;letter-spacing:-0.2px">r4rk1/1p3ppp/5n2/3Pp3/1q4b1/2B1PP2/2QR1P1P/4KB1R b K - 3 18</div>
<div class="cell" style="left:1525px;top:733px;width:112px;letter-spacing:-0.3px">b4a3</div>
<div class="cell" style="left:55px;top:752px;width:65px;letter-spacing:-0.35px">Gukesh D</div>
<div class="cell" style="left:126px;top:752px;width:123px;letter-spacing:-0.13px">Vidit, Santosh Gujrathi</div>
<div class="cell" style="left:255px;top:752px;width:156px;letter-spacing:-0.4px">FIDE Candidates 2024 | Open</div>
<div class="cell" style="left:412px;top:752px;width:74px;text-align:right;letter-spacing:-0.42px">2024-04-04</div>
<div class="cell" style="left:493px;top:752px;width:45px;text-align:right;letter-spacing:-0.3px">37</div>
<div class="cell" style="left:550px;top:752px;width:410px;letter-spacing:-0.2px">r4rk1/1p3ppp/5n2/3Pp3/6b1/q3PP2/1BQR1P1P/4KB1R b K - 5 19</div>
<div class="cell" style="left:966px;top:752px;width:417px;letter-spacing:-0.2px">r4rk1/1p3ppp/5n2/3Pp3/6b1/q1B1PP2/2QR1P1P/4KB1R w K - 4 19</div>
<div class="cell" style="left:1389px;top:752px;width:130px;letter-spacing:-0.2px">c3b2</div>
<div class="cell" style="left:55px;top:771px;width:65px;letter-spacing:-0.35px">Gukesh D</div>
<div class="cell" style="left:126px;top:771px;width:123px;letter-spacing:-0.13px">Vidit, Santosh Gujrathi</div>
<div class="cell" style="left:255px;top:771px;width:156px;letter-spacing:-0.4px">FIDE Candidates 2024 | Open</div>
<div class="cell" style="left:412px;top:771px;width:74px;text-align:right;letter-spacing:-0.42px">2024-04-04</div>
<div class="cell" style="left:493px;top:771px;width:45px;text-align:right;letter-spacing:-0.3px">38</div>
<div class="cell" style="left:550px;top:771px;width:410px;letter-spacing:-0.2px">r4rk1/1p3ppp/5n2/3Pp3/1q4b1/4PP2/1BQR1P1P/4KB1R w K - 6 20</div>
<div class="cell" style="left:966px;top:771px;width:417px;letter-spacing:-0.2px">r4rk1/1p3ppp/5n2/3Pp3/6b1/q3PP2/1BQR1P1P/4KB1R b K - 5 19</div>
<div class="cell" style="left:1525px;top:771px;width:112px;letter-spacing:-0.3px">a3b4</div>
<div class="cell" style="left:55px;top:790px;width:65px;letter-spacing:-0.35px">Gukesh D</div>
<div class="cell" style="left:126px;top:790px;width:123px;letter-spacing:-0.13px">Vidit, Santosh Gujrathi</div>
<div class="cell" style="left:255px;top:790px;width:156px;letter-spacing:-0.4px">FIDE Candidates 2024 | Open</div>
<div class="cell" style="left:412px;top:790px;width:74px;text-align:right;letter-spacing:-0.42px">2024-04-04</div>
<div class="cell" style="left:493px;top:790px;width:45px;text-align:right;letter-spacing:-0.3px">39</div>
<div class="cell" style="left:550px;top:790px;width:410px;letter-spacing:-0.2px">r4rk1/1p3ppp/5n2/3Pp3/1q4b1/2B1PP2/2QR1P1P/4KB1R b K - 7 20</div>
<div class="cell" style="left:966px;top:790px;width:417px;letter-spacing:-0.2px">r4rk1/1p3ppp/5n2/3Pp3/1q4b1/4PP2/1BQR1P1P/4KB1R w K - 6 20</div>
<div class="cell" style="left:1389px;top:790px;width:130px;letter-spacing:-0.2px">b2c3</div>
<div class="cell" style="left:55px;top:809px;width:65px;letter-spacing:-0.35px">Gukesh D</div>
<div class="cell" style="left:126px;top:809px;width:123px;letter-spacing:-0.13px">Vidit, Santosh Gujrathi</div>
<div class="cell" style="left:255px;top:809px;width:156px;letter-spacing:-0.4px">FIDE Candidates 2024 | Open</div>
<div class="cell" style="left:412px;top:809px;width:74px;text-align:right;letter-spacing:-0.42px">2024-04-04</div>
<div class="cell" style="left:493px;top:809px;width:45px;text-align:right;letter-spacing:-0.3px">40</div>
<div class="cell" style="left:550px;top:809px;width:410px;letter-spacing:-0.2px">r4rk1/1p3ppp/5n2/3Pp3/6b1/q1B1PP2/2QR1P1P/4KB1R w K - 8 21</div>
<div class="cell" style="left:966px;top:809px;width:417px;letter-spacing:-0.2px">r4rk1/1p3ppp/5n2/3Pp3/1q4b1/2B1PP2/2QR1P1P/4KB1R b K - 7 20</div>
<div class="cell" style="left:1525px;top:809px;width:112px;letter-spacing:-0.3px">b4a3</div>
<div class="cell" style="left:55px;top:828px;width:65px;letter-spacing:-0.35px">Gukesh D</div>
<div class="cell" style="left:126px;top:828px;width:123px;letter-spacing:-0.13px">Vidit, Santosh Gujrathi</div>
<div class="cell" style="left:255px;top:828px;width:156px;letter-spacing:-0.4px">FIDE Candidates 2024 | Open</div>
<div class="cell" style="left:412px;top:828px;width:74px;text-align:right;letter-spacing:-0.42px">2024-04-04</div>
<div class="cell" style="left:493px;top:828px;width:45px;text-align:right;letter-spacing:-0.3px">41</div>
<div class="cell" style="left:550px;top:828px;width:410px;letter-spacing:-0.2px">r4rk1/1p3ppp/5n2/3Pp3/6b1/q3PP2/1BQR1P1P/4KB1R b K - 9 21</div>
<div class="cell" style="left:966px;top:828px;width:417px;letter-spacing:-0.2px">r4rk1/1p3ppp/5n2/3Pp3/6b1/q1B1PP2/2QR1P1P/4KB1R w K - 8 21</div>
<div class="cell" style="left:1389px;top:828px;width:130px;letter-spacing:-0.2px">c3b2</div>
<div class="cell" style="left:55px;top:847px;width:65px;letter-spacing:-0.35px">Gukesh D</div>
<div class="cell" style="left:126px;top:847px;width:123px;letter-spacing:-0.13px">Vidit, Santosh Gujrathi</div>
<div class="cell" style="left:255px;top:847px;width:156px;letter-spacing:-0.4px">FIDE Candidates 2024 | Open</div>
<div class="cell" style="left:412px;top:847px;width:74px;text-align:right;letter-spacing:-0.42px">2024-04-04</div>
<div class="cell" style="left:493px;top:847px;width:45px;text-align:right;letter-spacing:-0.3px">42</div>
<div class="cell" style="left:550px;top:847px;width:410px;letter-spacing:-0.2px">r4rk1/1p3ppp/5n2/3Pp3/1q4b1/4PP2/1BQR1P1P/4KB1R w K - 10 22</div>
<div class="cell" style="left:966px;top:847px;width:417px;letter-spacing:-0.2px">r4rk1/1p3ppp/5n2/3Pp3/6b1/q3PP2/1BQR1P1P/4KB1R b K - 9 21</div>
<div class="cell" style="left:1525px;top:847px;width:112px;letter-spacing:-0.3px">a3b4</div>
<div class="a" style="left:493px;top:429px;width:49px;height:16px;border:1px solid #000;background:#bcdcfa"></div>
<div class="cell" style="left:494px;top:429px;width:44.5px;text-align:right;letter-spacing:-0.3px">20</div>
<div class="a" style="left:50px;top:619px;width:68px;height:16px;border:1px solid #000"></div>
<svg class="a" style="left:0;top:0;pointer-events:none" width="1637" height="886" viewBox="0 0 1637 886"><g fill="none" stroke="#ff0000" stroke-width="3.8"><ellipse cx="527" cy="436" rx="23.1" ry="12.1"/><ellipse cx="949" cy="436.5" rx="9.75" ry="14.85"/><ellipse cx="1535.7" cy="437" rx="20.2" ry="12.45"/></g></svg>
</body></html>
